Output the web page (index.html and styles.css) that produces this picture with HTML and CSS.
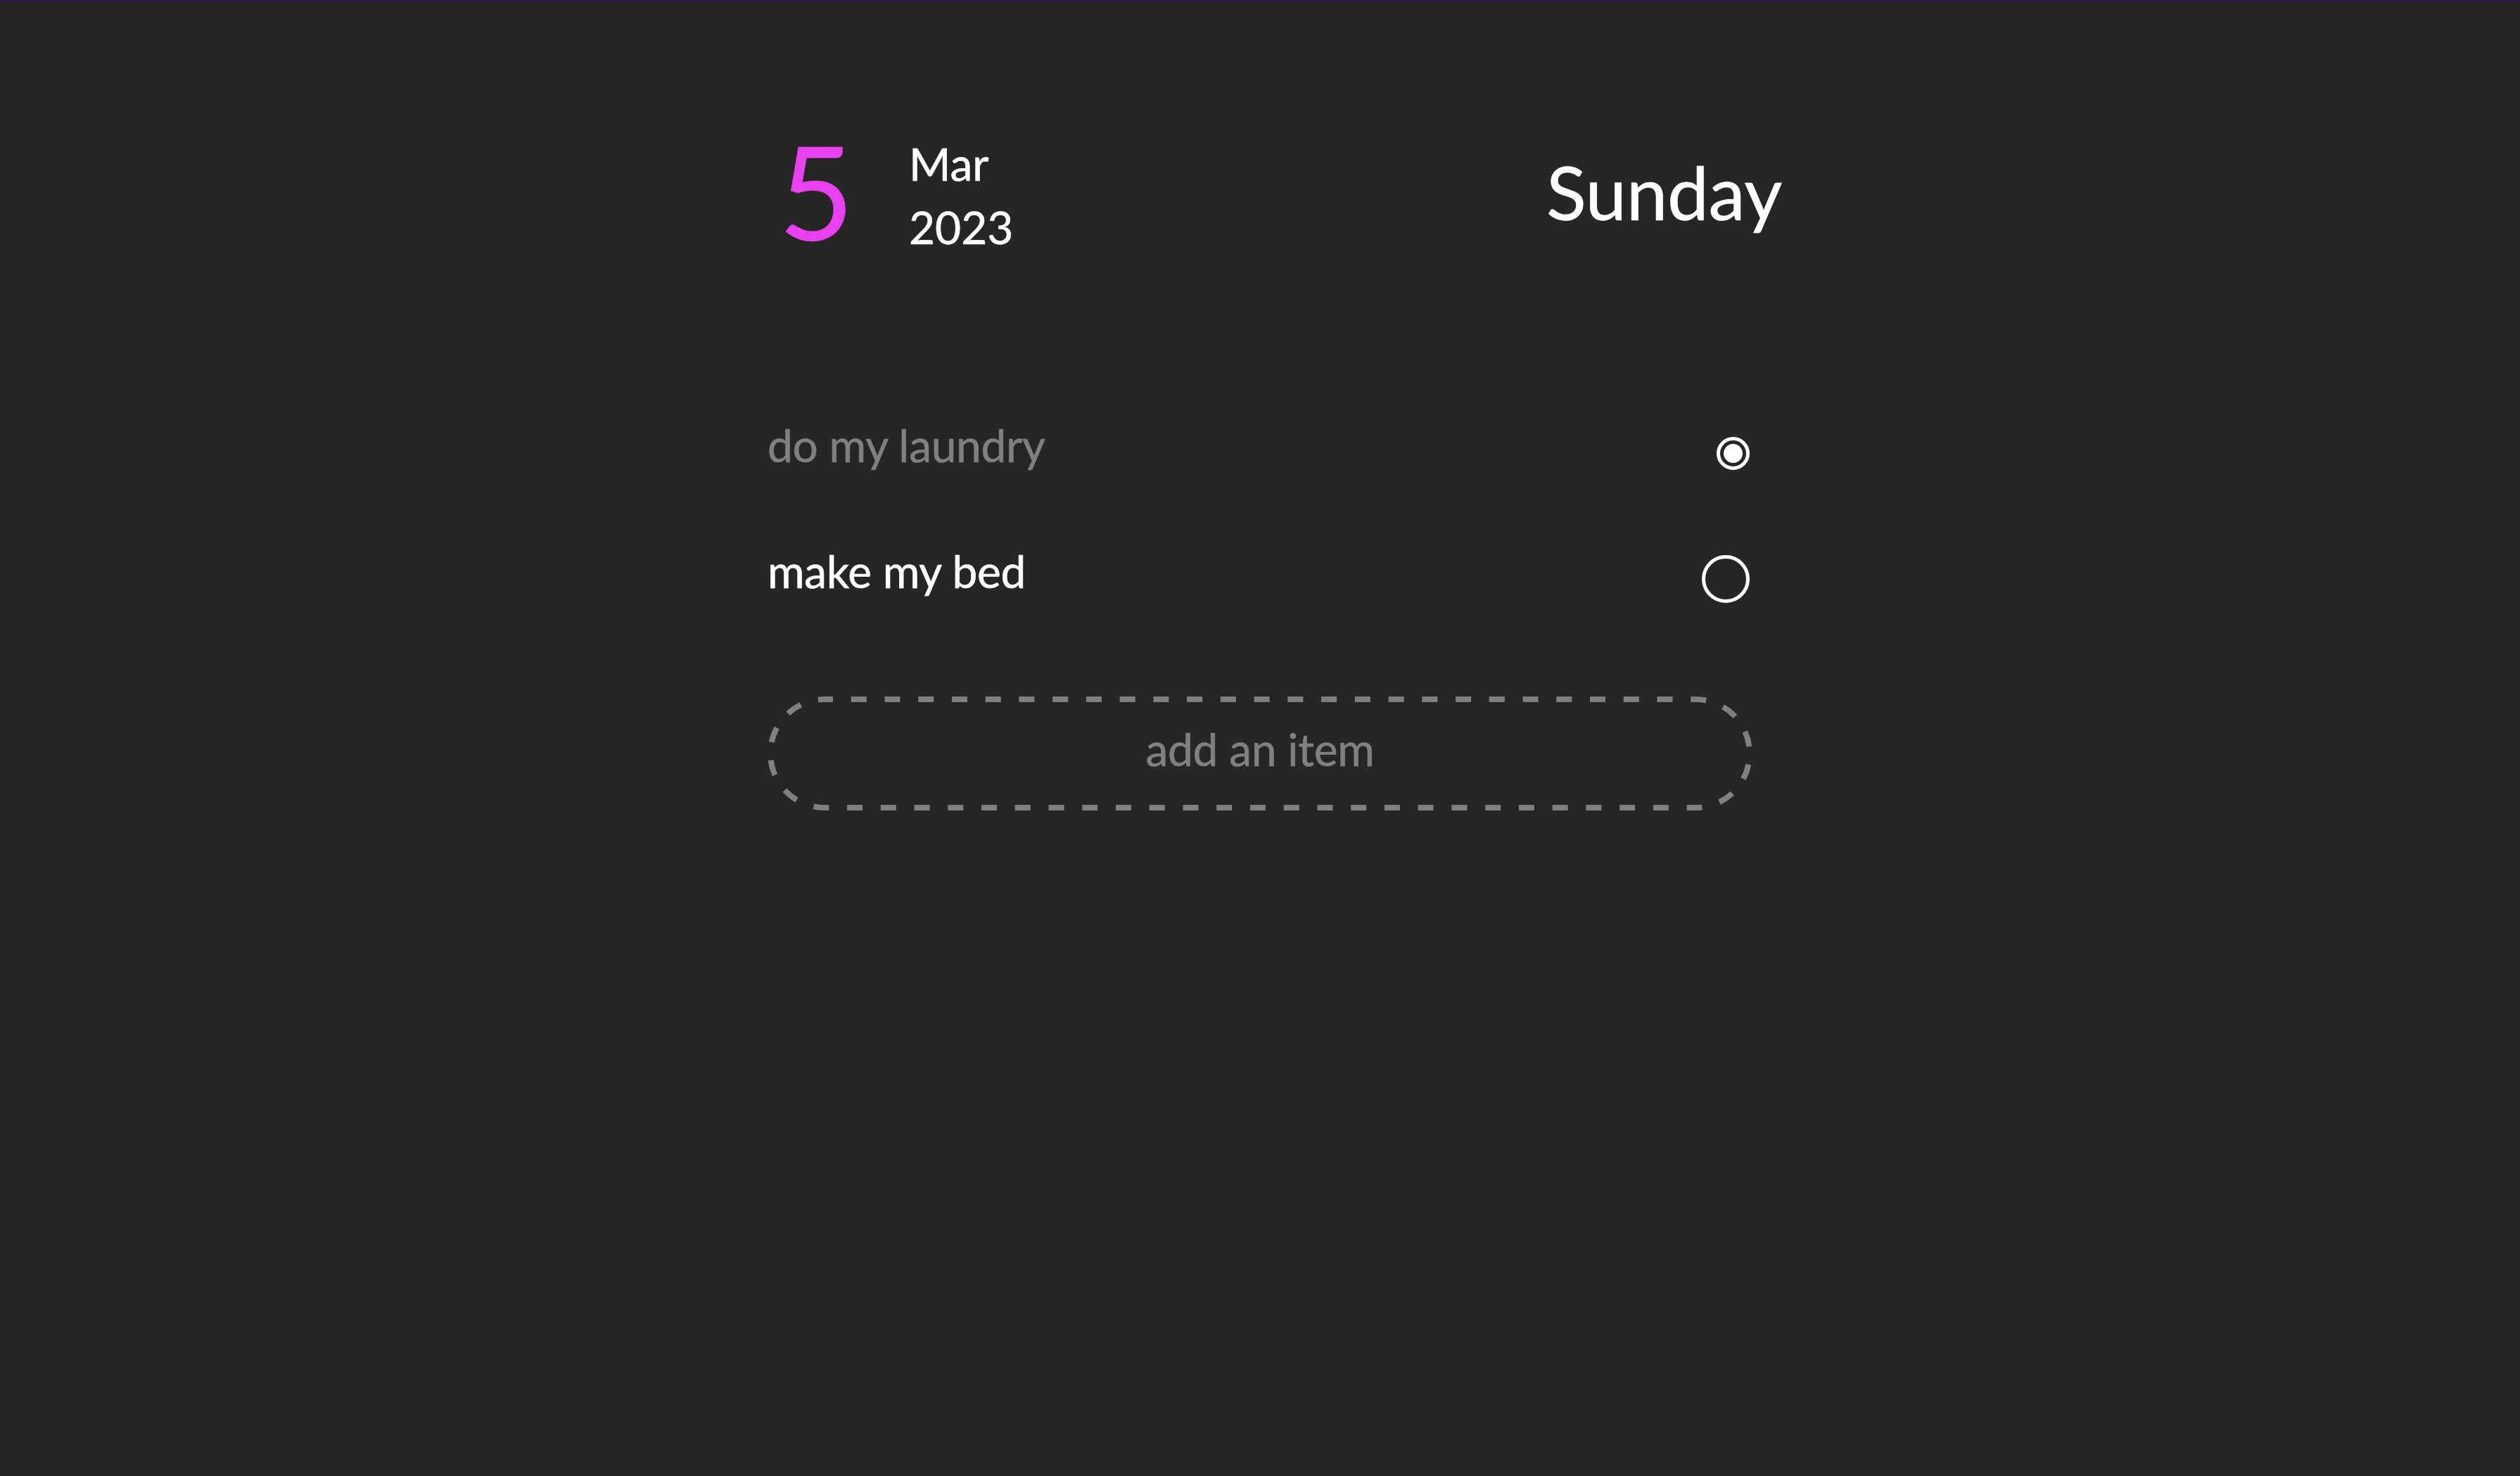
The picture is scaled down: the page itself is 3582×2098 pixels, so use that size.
FILE: index.html
```html
<!DOCTYPE html>
<html lang="en">
<head>
<meta charset="utf-8">
<title>Todo</title>
<link rel="stylesheet" href="styles.css">
</head>
<body>
<div class="topbar"></div>
<main class="app">
  <header class="header">
    <div class="date">
      <span class="day-num">5</span>
      <div class="month-year">
        <span>Mar</span>
        <span>2023</span>
      </div>
    </div>
    <div class="weekday">Sunday</div>
  </header>
  <ul class="list">
    <li class="item done">
      <span class="label">do my laundry</span>
      <span class="radio checked"><span class="dot"></span></span>
    </li>
    <li class="item">
      <span class="label">make my bed</span>
      <span class="radio big"></span>
    </li>
  </ul>
  <div class="add">
    <svg class="add-border" width="1400" height="162" viewBox="0 0 1400 162" aria-hidden="true">
      <rect x="4" y="4" width="1392" height="154" rx="77" ry="77" fill="none" stroke="#808080" stroke-width="8" stroke-dasharray="22 25.74" stroke-dashoffset="10"/>
    </svg>
    <span class="add-label">add an item</span>
  </div>
</main>
</body>
</html>
```
FILE: styles.css
```css
html, body {
  margin: 0;
  padding: 0;
  background: #262626;
}
body {
  font-family: Lato, "Noto Sans", sans-serif;
  color: #ffffff;
  min-height: 2098px;
  -webkit-text-stroke: 0.6px currentColor;
}
.topbar {
  height: 2px;
  background: #2e1a4e;
}
.app {
  width: 1400px;
  margin: 0 auto;
  padding-top: 177px;
}
.header {
  width: 1442px;
  display: flex;
  justify-content: space-between;
  align-items: flex-start;
}
.date {
  display: flex;
  align-items: flex-start;
  margin-left: 16px;
}
.day-num {
  font-size: 184px;
  line-height: 184px;
  color: #e940f0;
  width: 185px;
}
.month-year {
  display: flex;
  flex-direction: column;
  font-size: 64px;
  line-height: 90px;
  margin-top: 9px;
}
.weekday {
  font-size: 105px;
  line-height: 126px;
  margin-top: 30px;
  letter-spacing: -0.3px;
}
.list {
  list-style: none;
  margin: 0;
  padding: 0;
  margin-top: 176px;
}
.item {
  display: flex;
  justify-content: space-between;
  align-items: center;
  padding: 51px 4px 51px 0;
  font-size: 64px;
  line-height: 76.8px;
  letter-spacing: -0.3px;
}
.item.done .label {
  color: #808080;
}
.radio {
  box-sizing: border-box;
  border: 5px solid #ffffff;
  border-radius: 50%;
  display: flex;
  align-items: center;
  justify-content: center;
  margin-top: 11px;
  margin-bottom: -11px;
}
.radio.checked {
  width: 47px;
  height: 47px;
}
.radio.big {
  width: 68px;
  height: 68px;
}
.dot {
  width: 27px;
  height: 27px;
  border-radius: 50%;
  background: #ffffff;
}
.add {
  position: relative;
  margin-top: 88px;
  box-sizing: border-box;
  height: 162px;
  padding-top: 37px;
  color: #808080;
  font-size: 64px;
  line-height: 76.8px;
  text-align: center;
  letter-spacing: -0.3px;
}
.add-border {
  position: absolute;
  left: 0;
  top: 0;
  display: block;
}
.add-label {
  position: relative;
}
```
